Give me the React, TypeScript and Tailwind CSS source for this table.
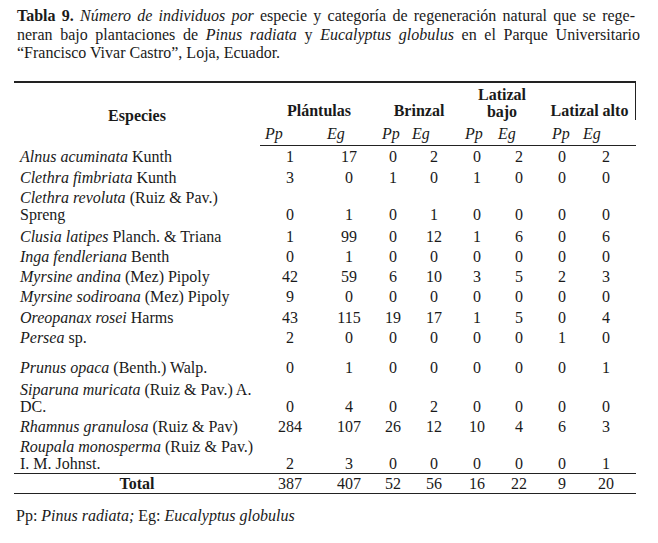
const font = { fontFamily: '"Liberation Serif", "Times New Roman", serif' };

type Row = {
  it: string;
  rest: string;
  l2?: string;
  v: number[];
  h: string;
};

const rows: Row[] = [
  { it: 'Alnus acuminata', rest: ' Kunth', v: [1, 17, 0, 2, 0, 2, 0, 2], h: 'h-[20px]' },
  { it: 'Clethra fimbriata', rest: ' Kunth', v: [3, 0, 1, 0, 1, 0, 0, 0], h: 'h-[21px]' },
  { it: 'Clethra revoluta', rest: ' (Ruiz & Pav.)', l2: 'Spreng', v: [0, 1, 0, 1, 0, 0, 0, 0], h: 'h-[37px]' },
  { it: 'Clusia latipes', rest: ' Planch. & Triana', v: [1, 99, 0, 12, 1, 6, 0, 6], h: 'h-[22px]' },
  { it: 'Inga fendleriana', rest: ' Benth', v: [0, 1, 0, 0, 0, 0, 0, 0], h: 'h-[20px]' },
  { it: 'Myrsine andina', rest: ' (Mez) Pipoly', v: [42, 59, 6, 10, 3, 5, 2, 3], h: 'h-[20px]' },
  { it: 'Myrsine sodiroana', rest: ' (Mez) Pipoly', v: [9, 0, 0, 0, 0, 0, 0, 0], h: 'h-[20px]' },
  { it: 'Oreopanax rosei', rest: ' Harms', v: [43, 115, 19, 17, 1, 5, 0, 4], h: 'h-[21px]' },
  { it: 'Persea', rest: ' sp.', v: [2, 0, 0, 0, 0, 0, 1, 0], h: 'h-[20px]' },
  { it: 'Prunus opaca', rest: ' (Benth.) Walp.', v: [0, 1, 0, 0, 0, 0, 0, 1], h: 'h-[30px]' },
  { it: 'Siparuna muricata', rest: ' (Ruiz & Pav.) A.', l2: 'DC.', v: [0, 4, 0, 2, 0, 0, 0, 0], h: 'h-[39px]' },
  { it: 'Rhamnus granulosa', rest: ' (Ruiz & Pav)', v: [284, 107, 26, 12, 10, 4, 6, 3], h: 'h-[20px]' },
  { it: 'Roupala monosperma', rest: ' (Ruiz & Pav.)', l2: 'I. M. Johnst.', v: [2, 3, 0, 0, 0, 0, 0, 1], h: 'h-[37px]' },
];

const totals = [387, 407, 52, 56, 16, 22, 9, 20];

const cols = 'grid grid-cols-[246px_60px_58px_30px_52px_34px_50px_36px_56px]';

// left offsets of the Pp / Eg labels inside their columns
const subPad = ['pl-[5px]', 'pl-[7px]', 'pl-[4px]', 'pl-[4px]', 'pl-[5px]', 'pl-[4px]', 'pl-[8px]', 'pl-[3px]'];

const NumCell = ({ n, i }: { n: number; i: number }) => (
  <div className={`flex items-end justify-center pb-[1px] ${i === 7 ? 'pr-[4px]' : ''}`}>{n}</div>
);

export default function App() {
  return (
    <div className="w-[658px] h-[543px] bg-white text-[16px] text-[#1a1a1a]" style={font}>
      {/* caption */}
      <div className="h-[81px] pt-[7px] pl-[17px] leading-[18.5px]">
        <div className="w-[618px] text-justify [text-align-last:justify]">
          <b>Tabla 9.</b> <i>Número de individuos por</i> especie y categoría de regeneración natural que se rege-
        </div>
        <div className="w-[623px] text-justify [text-align-last:justify]">
          neran bajo plantaciones de <i>Pinus radiata</i> y <i>Eucalyptus globulus</i> en el Parque Universitario
        </div>
        <div>“Francisco Vivar Castro”, Loja, Ecuador.</div>
      </div>

      {/* table */}
      <div className="ml-[14px] w-[622px] border-t-2 border-[#222]">
        <div className={`${cols} grid-rows-[37px_26px] font-bold leading-[18px]`}>
          <div className="row-span-2 flex items-center justify-center pt-[2px]">Especies</div>
          <div className="col-span-2 flex items-end justify-center">Plántulas</div>
          <div className="col-span-2 flex items-end justify-center">Brinzal</div>
          <div className="col-span-2 flex items-end justify-center text-center leading-[17px]">
            Latizal
            <br />
            bajo
          </div>
          <div className="col-span-2 flex items-end justify-center border-r border-[#222]">Latizal alto</div>
          {['Pp', 'Eg', 'Pp', 'Eg', 'Pp', 'Eg', 'Pp', 'Eg'].map((s, i) => (
            <div key={i} className={`flex items-end pb-[2px] border-b border-[#222] font-normal italic ${subPad[i]}`}>
              {s}
            </div>
          ))}
        </div>

        <div className="leading-[17px] border-b border-[#222]">
          {rows.map((r, k) => (
            <div key={k} className={`${cols} ${r.h}`}>
              <div className="flex items-end pb-[1px] pl-[6px]">
                <div>
                  <i>{r.it}</i>
                  {r.rest}
                  {r.l2 && (
                    <>
                      <br />
                      {r.l2}
                    </>
                  )}
                </div>
              </div>
              {r.v.map((n, i) => (
                <NumCell key={i} n={n} i={i} />
              ))}
            </div>
          ))}
        </div>

        <div className={`${cols} h-[20px] leading-[17px] border-b border-[#222]`}>
          <div className="flex items-end justify-center pb-[1px] font-bold">Total</div>
          {totals.map((n, i) => (
            <NumCell key={i} n={n} i={i} />
          ))}
        </div>
      </div>

      {/* footnote */}
      <div className="mt-[13px] pl-[16px] leading-[18px]">
        Pp: <i>Pinus radiata;</i> Eg: <i>Eucalyptus globulus</i>
      </div>
    </div>
  );
}
